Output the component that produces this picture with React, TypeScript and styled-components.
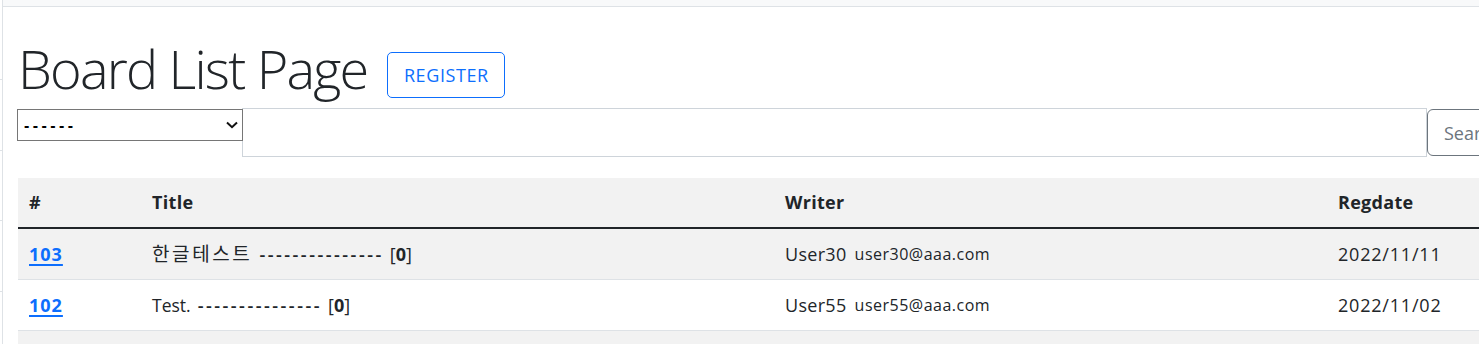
import React from "react";
import styled, { createGlobalStyle } from "styled-components";

const GlobalStyle = createGlobalStyle`
  html, body { margin: 0; padding: 0; background: #fff; overflow: hidden; }
  body {
    font-family: "Open Sans", "Noto Sans CJK KR", sans-serif;
    color: #212529;
  }
  * { box-sizing: border-box; }
`;

const Page = styled.div`
  display: flex;
  width: 1533px;
  min-height: 344px;
`;

const Sidebar = styled.aside`
  width: 3px;
  flex: none;
  border-right: 1px solid #dee2e6;
  display: flex;
  flex-direction: column;
`;

const SideItem = styled.div<{ $h: number }>`
  height: ${(p) => p.$h}px;
  border-bottom: 1px solid #dee2e6;
  flex: none;
`;

const Main = styled.main`
  flex: 1;
  display: flex;
  flex-direction: column;
`;

const TopBar = styled.div`
  height: 7px;
  background: #f8f9fa;
  border-bottom: 1px solid #dee2e6;
`;

const Container = styled.div`
  padding: 0 15px;
  display: flex;
  flex-direction: column;
`;

const TitleRow = styled.div`
  display: flex;
  align-items: flex-end;
  gap: 20px;
  margin-top: 28px;
  margin-bottom: 6px;
`;

const Heading = styled.h1`
  margin: 0;
  font-size: 54px;
  line-height: 67px;
  font-weight: 300;
  letter-spacing: -1.8px;
  color: #212529;
`;

const OutlineButton = styled.button<{ $tone: "primary" | "secondary" }>`
  font-family: "Open Sans", sans-serif;
  font-size: 18px;
  background: #fff;
  color: ${(p) => (p.$tone === "primary" ? "#0d6efd" : "#6c757d")};
  border: 1px solid ${(p) => (p.$tone === "primary" ? "#0d6efd" : "#6c757d")};
  border-radius: 5px;
  cursor: pointer;
`;

const RegisterButton = styled(OutlineButton)`
  width: 118px;
  height: 46px;
  padding: 0;
  letter-spacing: 0.6px;
  margin-bottom: 4px;
`;

const SearchButton = styled(OutlineButton)`
  height: 47px;
  padding: 0 16px;
  margin-top: 1px;
  border-radius: 6px 0 0 6px;
`;

const SearchGroup = styled.div`
  display: flex;
  align-items: flex-start;
`;

const SelectWrap = styled.div`
  position: relative;
  width: 226px;
  height: 32px;
  margin-top: 1px;
  margin-left: -1px;
  flex: none;
`;

const Select = styled.select`
  appearance: none;
  width: 100%;
  height: 100%;
  border: 1px solid #767676;
  border-radius: 0;
  background: #fff;
  font-family: "Liberation Sans", sans-serif;
  font-size: 16px;
  font-weight: 700;
  letter-spacing: 3.4px;
  padding: 0 0 0 6px;
  color: #000;
`;

const Chevron = styled.svg`
  position: absolute;
  right: 5px;
  top: 12px;
  pointer-events: none;
`;

const SearchInput = styled.input`
  flex: 1;
  height: 49px;
  border: 1px solid #ced4da;
  margin-left: -1px;
  font-size: 18px;
  background: #fff;
  outline: none;
`;

const Table = styled.div`
  margin-top: 21px;
  display: grid;
  grid-template-columns: 123px 633px 553px 1fr;
`;

const Row = styled.div<{ $shade?: boolean; $head?: boolean }>`
  display: contents;
  & > div {
    background: ${(p) => (p.$shade ? "#f2f2f2" : "#fff")};
    border-bottom: ${(p) => (p.$head ? "2px solid #212529" : "1px solid #dee2e6")};
    height: 51px;
    font-weight: ${(p) => (p.$head ? 700 : 400)};
  }
`;

const Cell = styled.div<{ $spacing?: number }>`
  padding: 0 11px;
  display: flex;
  align-items: center;
  font-size: 18px;
  line-height: 27px;
  letter-spacing: ${(p) => p.$spacing ?? 0.3}px;
  white-space: pre;
  color: #212529;
`;

const NumLink = styled.a`
  color: #0d6efd;
  font-weight: 700;
  letter-spacing: 1px;
  text-decoration: underline;
  text-underline-offset: 3px;
  text-decoration-thickness: 2px;
`;

const TitleText = styled.span<{ $cjk?: boolean }>`
  font-size: ${(p) => (p.$cjk ? 19 : 17.5)}px;
  letter-spacing: ${(p) => (p.$cjk ? 2.6 : 0)}px;
`;

const Dashes = styled.span`
  font-weight: 600;
  letter-spacing: 2.5px;
  margin-left: 7px;
  margin-right: 6px;
`;

const Email = styled.small`
  font-size: 16px;
  letter-spacing: 0.5px;
  margin-left: 8px;
`;

const Reply = styled.b`
  font-weight: 700;
`;

const rows = [
  { bno: 103, title: "한글테스트", cjk: true, reply: 0, writer: "User30", email: "user30@aaa.com", date: "2022/11/11" },
  { bno: 102, title: "Test.", cjk: false, reply: 0, writer: "User55", email: "user55@aaa.com", date: "2022/11/02" },
];

export default function App() {
  return (
    <>
      <GlobalStyle />
      <Page>
        <Sidebar>
          <SideItem $h={80} />
          <SideItem $h={71} />
          <SideItem $h={70} />
          <SideItem $h={71} />
        </Sidebar>
        <Main>
          <TopBar />
          <Container>
            <TitleRow>
              <Heading>Board List Page</Heading>
              <RegisterButton $tone="primary">REGISTER</RegisterButton>
            </TitleRow>
            <SearchGroup>
              <SelectWrap>
                <Select defaultValue="">
                  <option value="">------</option>
                  <option value="t">Title</option>
                  <option value="c">Content</option>
                  <option value="w">Writer</option>
                </Select>
                <Chevron width="12" height="8" viewBox="0 0 12 8">
                  <path d="M1 1.5 L6 6.2 L11 1.5" fill="none" stroke="#111" strokeWidth="2" />
                </Chevron>
              </SelectWrap>
              <SearchInput />
              <SearchButton $tone="secondary">Search</SearchButton>
            </SearchGroup>
            <Table>
              <Row $shade $head>
                <Cell>#</Cell>
                <Cell>Title</Cell>
                <Cell>Writer</Cell>
                <Cell>Regdate</Cell>
              </Row>
              {rows.map((r, i) => (
                <Row key={r.bno} $shade={i % 2 === 0}>
                  <Cell>
                    <NumLink href="#">{r.bno}</NumLink>
                  </Cell>
                  <Cell $spacing={0}>
                    <TitleText $cjk={r.cjk}>{r.title}</TitleText>
                    <Dashes>---------------</Dashes>[<Reply>{r.reply}</Reply>]
                  </Cell>
                  <Cell>
                    {r.writer}
                    <Email>{r.email}</Email>
                  </Cell>
                  <Cell $spacing={0.8}>{r.date}</Cell>
                </Row>
              ))}
              <Row $shade>
                <Cell />
                <Cell />
                <Cell />
                <Cell />
              </Row>
            </Table>
          </Container>
        </Main>
      </Page>
    </>
  );
}
